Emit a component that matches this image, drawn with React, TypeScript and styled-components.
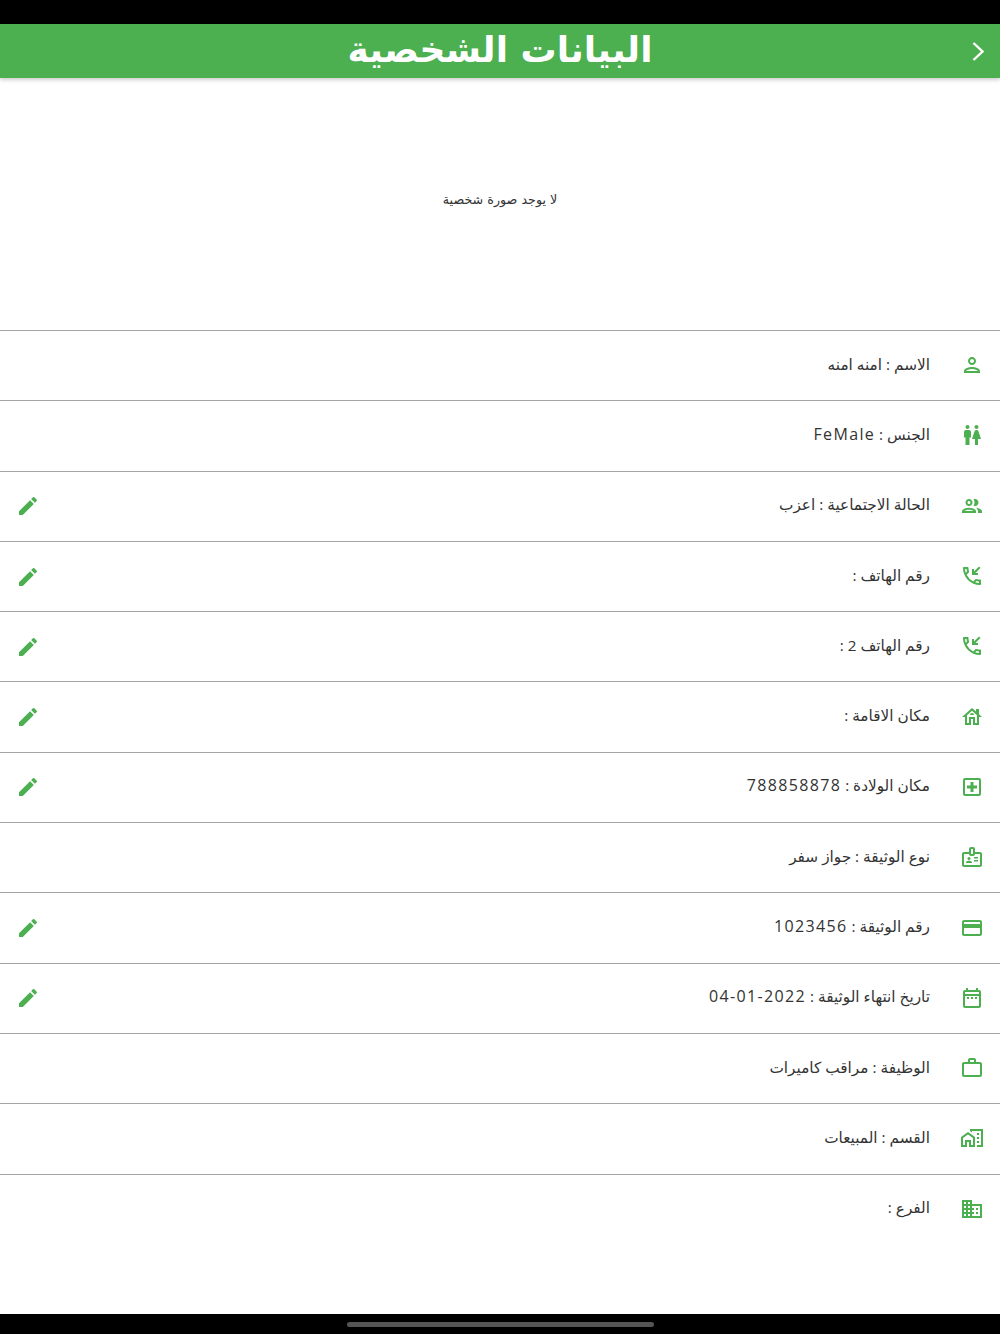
import React from 'react';
import styled, { createGlobalStyle } from 'styled-components';
import {
  MdOutlinePerson,
  MdWc,
  MdOutlinePeople,
  MdOutlinePhoneCallback,
  MdOutlineHouse,
  MdOutlineLocalHospital,
  MdOutlineBadge,
  MdOutlineCreditCard,
  MdOutlineDateRange,
  MdOutlineWorkOutline,
  MdOutlineMapsHomeWork,
  MdOutlineBusiness,
  MdEdit,
} from 'react-icons/md';

const GlobalStyle = createGlobalStyle`
  html, body {
    margin: 0;
    padding: 0;
    background: #000;
  }
`;

const Screen = styled.div`
  width: 1000px;
  height: 1334px;
  display: flex;
  flex-direction: column;
  direction: rtl;
  overflow: hidden;
  background: #fff;
  font-family: 'Open Sans', 'DejaVu Sans', sans-serif;
`;

const StatusBar = styled.div`
  height: 24px;
  flex: none;
  background: #000;
`;

const Header = styled.header`
  height: 54px;
  flex: none;
  position: relative;
  z-index: 1;
  display: flex;
  align-items: center;
  justify-content: center;
  background: #4caf50;
  box-shadow: 0 2px 4px rgba(0, 0, 0, 0.2);
`;

const Title = styled.h1`
  margin: 0 0 4px;
  font-family: 'DejaVu Sans', sans-serif;
  font-size: 36px;
  font-weight: 700;
  color: #fff;
`;

const BackButton = styled.svg`
  position: absolute;
  right: 16px;
  top: 18px;
  width: 12px;
  height: 19px;
  fill: none;
  stroke: #fff;
  stroke-width: 2.4;
`;

const PhotoArea = styled.div`
  height: 252px;
  flex: none;
  display: flex;
  align-items: center;
  justify-content: center;
  box-sizing: border-box;
  padding-bottom: 9px;
  font-family: 'DejaVu Sans', sans-serif;
  font-size: 12.7px;
  color: #333;
`;

const List = styled.div`
  flex: 1;
`;

const Row = styled.div`
  height: 70.3px;
  box-sizing: border-box;
  display: flex;
  align-items: center;
  border-top: 1px solid #a4a4a4;
  padding-left: 16px;
  padding-right: 16px;
`;

const RowIcon = styled.span`
  width: 24px;
  flex: none;
  display: flex;
  padding-bottom: 1px;
  color: #4caf50;
  font-size: 24px;
`;

const RowText = styled.span`
  flex: 1;
  margin-right: 30px;
  padding-bottom: 4px;
  font-size: 15.3px;
  color: #333;
`;

const Value = styled.span`
  display: inline-block;
  direction: ltr;
  font-size: 16px;
  letter-spacing: 1.35px;
`;

const EditButton = styled.span`
  display: flex;
  color: #4caf50;
  font-size: 24px;
`;

const HomeBar = styled.div`
  height: 20px;
  flex: none;
  display: flex;
  align-items: center;
  justify-content: center;
  background: #000;
`;

const HomePill = styled.div`
  width: 307px;
  height: 5px;
  border-radius: 3px;
  background: #555;
`;

const rows = [
  { icon: MdOutlinePerson, text: 'الاسم : امنه امنه', editable: false },
  { icon: MdWc, text: 'الجنس : ', value: 'FeMale', editable: false },
  { icon: MdOutlinePeople, text: 'الحالة الاجتماعية : اعزب', editable: true },
  { icon: MdOutlinePhoneCallback, text: 'رقم الهاتف :', editable: true },
  { icon: MdOutlinePhoneCallback, text: 'رقم الهاتف 2 :', editable: true },
  { icon: MdOutlineHouse, text: 'مكان الاقامة :', editable: true },
  { icon: MdOutlineLocalHospital, text: 'مكان الولادة : ', value: '788858878', editable: true },
  { icon: MdOutlineBadge, text: 'نوع الوثيقة : جواز سفر', editable: false },
  { icon: MdOutlineCreditCard, text: 'رقم الوثيقة : ', value: '1023456', editable: true },
  { icon: MdOutlineDateRange, text: 'تاريخ انتهاء الوثيقة : ', value: '04-01-2022', editable: true },
  { icon: MdOutlineWorkOutline, text: 'الوظيفة : مراقب كاميرات', editable: false },
  { icon: MdOutlineMapsHomeWork, text: 'القسم : المبيعات', editable: false },
  { icon: MdOutlineBusiness, text: 'الفرع :', editable: false },
];

export default function App() {
  return (
    <Screen>
      <GlobalStyle />
      <StatusBar />
      <Header>
        <BackButton viewBox="0 0 12 19">
          <polyline points="1.5,1 10.5,9.5 1.5,18" />
        </BackButton>
        <Title>البيانات الشخصية</Title>
      </Header>
      <PhotoArea>لا يوجد صورة شخصية</PhotoArea>
      <List>
        {rows.map((row) => (
          <Row key={row.text}>
            <RowIcon>
              <row.icon />
            </RowIcon>
            <RowText>
              {row.text}
              {row.value && <Value>{row.value}</Value>}
            </RowText>
            {row.editable && (
              <EditButton>
                <MdEdit />
              </EditButton>
            )}
          </Row>
        ))}
      </List>
      <HomeBar>
        <HomePill />
      </HomeBar>
    </Screen>
  );
}
